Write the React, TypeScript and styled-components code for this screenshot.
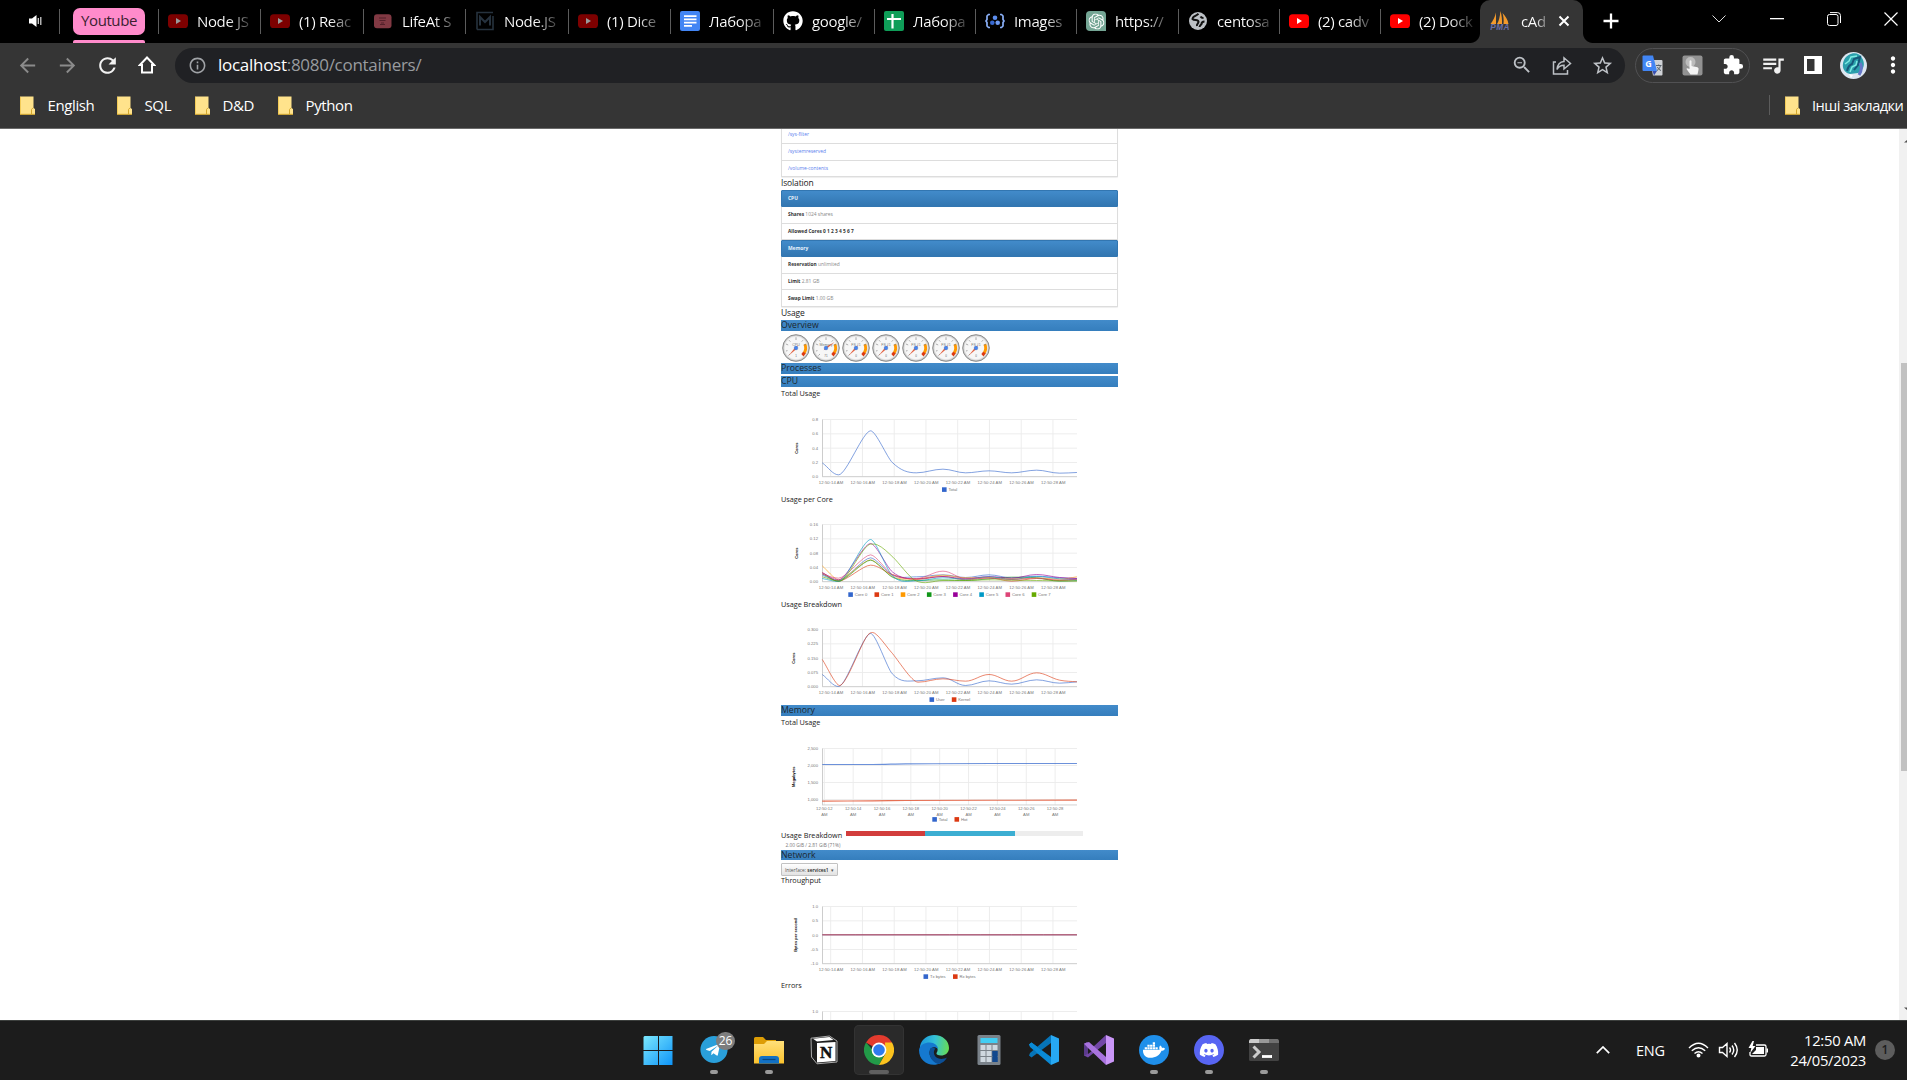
import React from 'react';
import styled, { createGlobalStyle, css } from 'styled-components';
import { FaDiscord, FaDocker, FaGithub, FaTelegramPlane } from 'react-icons/fa';
import { SiOpenai } from 'react-icons/si';
import {
  MdArrowBack, MdArrowForward, MdRefresh, MdExtension, MdMoreVert, MdStarBorder,
  MdInfoOutline, MdZoomOut, MdQueueMusic,
} from 'react-icons/md';

const Global = createGlobalStyle`
  * { box-sizing: border-box; }
  html, body { margin: 0; height: 1080px; overflow: hidden; background: #fff; }
  body { font-family: "Open Sans", "Noto Sans", sans-serif; }
  svg { display: block; flex: none; }
`;

const Screen = styled.div`
  width: 1907px;
  height: 1080px;
  display: flex;
  flex-direction: column;
  overflow: hidden;
`;

/* ---------- tab strip ---------- */
const TabStrip = styled.div`
  height: 43px;
  flex: none;
  display: flex;
  background: #000;
  color: #fff;
`;
const AudioTab = styled.div`
  width: 59px;
  display: flex;
  align-items: center;
  padding: 0 0 1px 29px;
`;
const Divider = styled.div<{ $mt?: number; $h?: number }>`
  width: 1px;
  flex: none;
  height: ${p => p.$h ?? 25}px;
  margin-top: ${p => p.$mt ?? 9}px;
  background: #5c5c5c;
`;
const GroupTab = styled.div`
  width: 98px;
  display: flex;
  flex-direction: column;
  align-items: flex-start;
  justify-content: space-between;
  padding: 8px 13px 0;
`;
const GroupPill = styled.div`
  width: 72px;
  height: 27px;
  border-radius: 7px;
  background: #ff8bcb;
  color: #3c1f30;
  font-size: 15px;
  line-height: 25px;
  letter-spacing: -0.4px;
  text-align: center;
`;
const GroupLine = styled.div`
  width: 72px;
  height: 3px;
  border-radius: 2px 2px 0 0;
  background: #ff8bcb;
`;
const TabBox = styled.div<{ $w: number }>`
  width: ${p => p.$w}px;
  flex: none;
  display: flex;
`;
const TabBody = styled.div`
  display: flex;
  align-items: center;
  gap: 9px;
  padding: 0 0 1px 9px;
`;
const TabTitle = styled.div<{ $w?: number; $tone: string }>`
  width: ${p => p.$w ?? 56}px;
  white-space: nowrap;
  font-size: 15px;
  letter-spacing: -0.35px;
  line-height: 22px;
  padding-bottom: 1px;
  color: transparent;
  background: linear-gradient(90deg, #fff 55%, ${p => p.$tone} 98%);
  background-clip: text;
`;
const ActiveTab = styled.div`
  position: relative;
  width: 103px;
  margin-left: -1px;
  flex: none;
  display: flex;
  align-items: center;
  padding: 0 0 1px 10px;
  gap: 11px;
  background: #353535;
  border-radius: 10px 10px 0 0;
  &::before, &::after {
    content: "";
    position: absolute;
    bottom: 0;
    width: 10px;
    height: 10px;
  }
  &::before { left: -10px; background: radial-gradient(circle at 0 0, #000 9.5px, #353535 10.5px); }
  &::after { right: -10px; background: radial-gradient(circle at 100% 0, #000 9.5px, #353535 10.5px); }
`;
const NewTab = styled.div`
  width: 56px;
  display: flex;
  align-items: center;
  justify-content: center;
  padding-bottom: 1px;
`;
const WindowButtons = styled.div`
  margin-left: auto;
  display: flex;
  height: 37px;
  margin-right: -13px;
`;
const WindowButton = styled.div`
  width: 57.4px;
  display: flex;
  align-items: center;
  justify-content: center;
`;

/* ---------- toolbar ---------- */
const Toolbar = styled.div`
  height: 45px;
  flex: none;
  display: flex;
  align-items: center;
  padding: 0 0 1px 7px;
  background: #353535;
  color: #f1f1f1;
`;
const IconCell = styled.div<{ $dim?: boolean }>`
  width: 40px;
  flex: none;
  display: flex;
  justify-content: center;
  color: ${p => (p.$dim ? '#8b8b8b' : 'inherit')};
`;
const Omnibox = styled.div`
  height: 35px;
  width: 1450px;
  flex: none;
  margin-left: 8px;
  border-radius: 18px;
  background: #202124;
  display: flex;
  align-items: center;
  padding: 0 3px 0 13px;
  color: #bdc1c6;
`;
const Url = styled.div`
  flex: 1;
  margin-left: 11px;
  font-size: 17px;
  letter-spacing: -0.28px;
  line-height: 24px;
  color: #989b9f;
  b { font-weight: 400; color: #fff; }
`;
const Extensions = styled.div`
  height: 35px;
  width: 115px;
  flex: none;
  margin: 0 3px 0 10px;
  display: flex;
  align-items: center;
  justify-content: center;
  border: 1px solid #515153;
  border-radius: 18px;
`;
const Avatar = styled.div`
  width: 27px;
  height: 27px;
  border-radius: 50%;
  overflow: hidden;
`;

/* ---------- bookmarks ---------- */
const Bookmarks = styled.div`
  height: 41px;
  flex: none;
  display: flex;
  align-items: center;
  padding: 0 0 6px 20px;
  background: #353535;
  border-bottom: 1px solid #6a6a6a;
  color: #fff;
`;
const Bookmark = styled.div<{ $w?: number; $tight?: boolean }>`
  width: ${p => (p.$w ? p.$w + 'px' : 'auto')};
  display: flex;
  align-items: center;
  gap: ${p => (p.$tight ? 12 : 12.5)}px;
  font-size: ${p => (p.$tight ? 14.6 : 15)}px;
  letter-spacing: ${p => (p.$tight ? -0.52 : -0.38)}px;
  line-height: 22px;
  white-space: nowrap;
`;
const OtherBookmarks = styled.div`
  margin-left: auto;
  width: 138px;
  display: flex;
  align-items: center;
  gap: 15px;
`;

/* ---------- page ---------- */
const Viewport = styled.div`
  height: 891px;
  flex: none;
  display: flex;
  overflow: hidden;
  background: #fff;
`;
const Page = styled.div`
  width: 337px;
  margin-left: 781px;
  display: flex;
  flex-direction: column;
  color: #333;
`;
const Scrollbar = styled.div`
  width: 8px;
  margin-left: auto;
  background: #f1f1f1;
  padding: 11px 0 10px;
  display: flex;
  flex-direction: column;
  align-items: flex-end;
`;
const Thumb = styled.div`
  width: 6px;
  height: 408px;
  margin: 220px 0 auto;
  background: #c1c1c1;
`;
const ListGroup = styled.div<{ $h: number }>`
  height: ${p => p.$h}px;
  flex: none;
  display: flex;
  flex-direction: column;
  border: 1px solid #ddd;
  border-top: 0;
  border-radius: 0 0 1px 1px;
  box-shadow: 0 1px 1px #eee;
`;
const rowText = css`
  font-size: 4.9px;
  line-height: 7px;
  padding-left: 6px;
  white-space: pre;
`;
const ListRow = styled.div<{ $link?: boolean; $h?: number }>`
  ${rowText}
  flex: ${p => (p.$h ? `0 0 ${p.$h}px` : 1)};
  display: flex;
  align-items: center;
  padding-bottom: ${p => (p.$h ? 3.5 : 0)}px;
  color: ${p => (p.$link ? '#5b80ee' : '#888')};
  & + & { border-top: 1px solid #ddd; }
  b { color: #333; font-weight: 700; font-size: 4.8px; }
`;
const ListHead = styled.div`
  ${rowText}
  height: 17px;
  flex: none;
  display: flex;
  align-items: center;
  color: #e8f2fb;
  font-weight: 700;
  border: 1px solid #3276b1;
  border-radius: 1px 1px 0 0;
  background: linear-gradient(#428bca, #3276b1);
`;
const Heading = styled.div<{ $h: number }>`
  height: ${p => p.$h}px;
  flex: none;
  padding-top: 0.5px;
  font-size: 8.5px;
  letter-spacing: -0.15px;
  line-height: 9px;
  color: #222;
`;
const SectionBar = styled.div<{ $mt?: number; $h?: number }>`
  height: ${p => p.$h ?? 11}px;
  margin-top: ${p => p.$mt ?? 0}px;
  flex: none;
  background: linear-gradient(#428bca, #357ebd);
  font-size: 8.7px;
  line-height: 11px;
  color: #1d2830;
`;
const Gauges = styled.div`
  height: 32px;
  flex: none;
  display: flex;
  gap: 2px;
  padding: 3px 0 0 1px;
`;
const ChartTitle = styled.div<{ $h: number; $mb: number }>`
  height: ${p => p.$h}px;
  margin-bottom: ${p => p.$mb}px;
  flex: none;
  display: flex;
  align-items: center;
  font-size: 7.3px;
  line-height: 9px;
  letter-spacing: -0.04px;
  color: #222;
`;
const BreakdownRow = styled.div`
  height: 14px;
  flex: none;
  display: flex;
  gap: 4px;
`;
const Progress = styled.div`
  width: 237px;
  height: 5px;
  margin-top: 4px;
  display: flex;
  background: #ededed;
`;
const Segment = styled.div<{ $w: number; $c: string }>`
  width: ${p => p.$w}px;
  background: ${p => p.$c};
`;
const BreakdownLabel = styled.div`
  width: 61px;
  font-size: 7.3px;
  line-height: 16px;
  letter-spacing: -0.02px;
  white-space: nowrap;
  color: #222;
`;
const Caption = styled.div`
  height: 9px;
  flex: none;
  padding-left: 4.5px;
  font-size: 4.8px;
  line-height: 8px;
  color: #777;
`;
const InterfaceButton = styled.div`
  width: 57px;
  height: 13px;
  margin-top: 3px;
  flex: none;
  display: flex;
  align-items: center;
  justify-content: center;
  white-space: pre;
  border: 1px solid #c2c2c2;
  border-radius: 1px;
  background: linear-gradient(#fff, #e2e2e2);
  font-size: 4.8px;
  color: #555;
  b { font-weight: 600; color: #222; }
`;

type Pt = [number, number];
interface Series { name?: string; color: string; points: Pt[] }

const smooth = (p: Pt[]) => {
  const slope = p.map((_, i) => {
    if (i === 0 || i === p.length - 1) return i === 0
      ? (p[1][1] - p[0][1]) / (p[1][0] - p[0][0])
      : (p[i][1] - p[i - 1][1]) / (p[i][0] - p[i - 1][0]);
    const a = (p[i][1] - p[i - 1][1]) / (p[i][0] - p[i - 1][0]);
    const b = (p[i + 1][1] - p[i][1]) / (p[i + 1][0] - p[i][0]);
    return a * b <= 0 ? 0 : (a + b) / 2;
  });
  let d = `M${p[0][0]} ${p[0][1]}`;
  for (let i = 0; i < p.length - 1; i++) {
    const steep = Math.abs(p[i + 1][1] - p[i][1]) > 40;
    const dx = (p[i + 1][0] - p[i][0]) * (steep ? 0.24 : 0.36);
    d += `C${p[i][0] + dx} ${p[i][1] + slope[i] * dx} ${p[i + 1][0] - dx} ${p[i + 1][1] - slope[i + 1] * dx} ${p[i + 1][0]} ${p[i + 1][1]}`;
  }
  return d;
};

const xs = [0, 49, 145, 210, 282, 362, 430, 500, 568, 643, 712, 764];
const line = (name: string, color: string, ys: number[]): Series =>
  ({ name, color, points: ys.map((y, i) => [xs[i], y] as Pt) });

interface ChartProps {
  axis?: string;
  axisX?: number;
  ticks: string[];
  tickYs?: number[];
  series: Series[];
  legend: [string, string, number][];
  memory?: boolean;
  height?: number;
  weight?: number;
}

const Chart = ({ axis, axisX = 16, ticks, tickYs, series, legend, memory, height = 92, weight = 0.85 }: ChartProps) => {
  const top = 18.5;
  const h = memory ? 56.5 : 57.2;
  const partial = height < 60;
  const rows = tickYs ?? ticks.map((_, i) => (h * i) / (ticks.length - 1));
  const cols = memory
    ? [12, 14, 16, 18, 20, 22, 24, 26, 28].map((s, i) => ({ s, x: 43.3 + i * 28.85 }))
    : [14, 16, 18, 20, 22, 24, 26, 28].map((s, i) => ({ s, x: 49.7 + i * 31.75 }));
  const ly = memory ? 89.5 : 88.7;
  return (
    <svg width="337" height={height} viewBox={`0 0 337 ${height}`} fontFamily='"Liberation Sans", Arial, sans-serif'>
      {cols.map(c => <rect key={c.s} x={c.x - 0.5} y={top} width="1" height={h} fill="#ededed" />)}
      {rows.map((y, i) => <rect key={i} x="41.3" y={top + y - 0.4} width="254.7" height="0.9" fill="#ebebeb" />)}
      <rect x="41" y={top} width="0.9" height={h} fill="#c8c8c8" />
      <rect x="41" y={top + h - 0.5} width="255" height="0.9" fill="#cecece" />
      {ticks.map((t, i) => (
        <text key={t} x="37" y={top + rows[i] + 1.5} fontSize="4.2" textAnchor="end" fill="#777">{t}</text>
      ))}
      <g transform={`translate(41.3 ${top}) scale(.33333)`}>
        {series.map((s, i) => (
          <path key={i} d={smooth(s.points)} fill="none" stroke={s.color} strokeWidth={weight * 3} strokeOpacity=".72" />
        ))}
      </g>
      {!partial && cols.map(c => memory ? (
        <g key={c.s} fontSize="4.2" textAnchor="middle" fill="#777">
          <text x={c.x} y="80" textLength="16.5">12:50:{c.s}</text>
          <text x={c.x} y="86">AM</text>
        </g>
      ) : (
        <text key={c.s} x={c.x + 0.3} y="82.900" fontSize="4.2" textAnchor="middle" fill="#777" textLength="24.4">12:50:{c.s} AM</text>
      ))}
      {axis && (
        <text transform={`translate(${axisX + 0.8} ${top + h / 2}) rotate(-90)`} fontSize="4" fontWeight="700" textAnchor="middle" fill="#000">{axis}</text>
      )}
      {legend.map(([n, c, x]) => (
        <g key={n}>
          <rect x={x} y={ly - 2.4} width="4.6" height="4.6" fill={c} />
          <text x={x + 6.4} y={ly + 1.4} fontSize="4.2" fill="#777">{n}</text>
        </g>
      ))}
    </svg>
  );
};

const BLUE = '#3366cc';
const RED = '#dc3912';

const cores: Series[] = [
  line('Core 0', '#3366cc', [152, 168, 100, 152, 157, 151, 159, 151, 160, 155, 160, 162]),
  line('Core 1', '#dc3912', [144, 170, 122, 150, 165, 156, 166, 160, 170, 162, 168, 164]),
  line('Core 2', '#ff9900', [124, 166, 106, 156, 163, 152, 160, 159, 163, 160, 164, 157]),
  line('Core 3', '#109618', [148, 170, 107, 158, 168, 166, 168, 163, 158, 160, 170, 168]),
  line('Core 4', '#990099', [145, 166, 57, 142, 163, 156, 163, 156, 161, 150, 159, 162]),
  line('Core 5', '#0099c6', [162, 171, 45, 154, 169, 160, 164, 157, 165, 156, 163, 166]),
  line('Core 6', '#dd4477', [149, 161, 91, 150, 162, 140, 162, 161, 165, 161, 167, 165]),
  { name: 'Core 7', color: '#66aa00', points: [[0, 157], [52, 170], [145, 59], [165, 61], [212, 98], [277, 167], [362, 168], [430, 168], [500, 166], [568, 167], [643, 168], [712, 169], [764, 170]] },
];

const Gauge = ({ label, value, angle }: { label: string; value: string; angle: number }) => (
  <svg width="28" height="28" viewBox="0 0 28 28" fontFamily='"Liberation Sans", Arial, sans-serif'>
    <circle cx="14" cy="14" r="13.3" fill="#ccc" stroke="#8b8b8b" strokeWidth="1" />
    <circle cx="14" cy="14" r="11.7" fill="#f7f7f7" stroke="#e2e2e2" strokeWidth=".6" />
    <path d="M22.9 10.3A9.6 9.6 0 0 1 22.2 19" fill="none" stroke="#ff9900" strokeWidth="2.9" />
    <path d="M22.4 18.6A9.6 9.6 0 0 1 20.4 21.2" fill="none" stroke="#dc3912" strokeWidth="3.2" />
    <path d="M14 3.2v2.8M4 10l2.2 1M6.4 21.6l1.6-1.6M7 6.2l1.3 1.4M21 6.2l-1.3 1.4M24 10l-2.2 1M4 17l1.5-.4" stroke="#777" strokeWidth=".6" />
    <text x="14" y="11.6" fontSize="3.6" textAnchor="middle" fill="#777">{label}</text>
    <text x="14" y="23.4" fontSize="3" textAnchor="middle" fill="#666">{value}</text>
    <g transform={`rotate(${angle} 14 14)`}>
      <path d="M10.8 14.6L14 13 24.500 13.8 14 15Z" fill="#dc3912" fillOpacity=".8" />
    </g>
    <circle cx="14" cy="14" r="1.9" fill="#4684ee" stroke="#3b69b8" strokeWidth=".3" />
  </svg>
);

/* ---------- favicons ---------- */
const YouTube = ({ dim }: { dim?: boolean }) => (
  <svg width="20" height="20" viewBox="0 0 20 20">
    <rect y="3.2" width="20" height="13.8" rx="3.6" fill={dim ? '#7d0000' : '#f00'} />
    <path d="M8 7.1v5.8l5-2.9z" fill={dim ? '#9a9a9a' : '#fff'} />
  </svg>
);
const LifeAt = () => (
  <svg width="20" height="20" viewBox="0 0 20 20">
    <rect x="1" y="3.2" width="17.5" height="14" rx="3" fill="#813943" />
    <path d="M6 7h7M6.5 9.5h6M8 12h3M7 13.5h5" stroke="#53202a" strokeWidth="1.2" />
  </svg>
);
const MetaM = () => (
  <svg width="20" height="20" viewBox="0 0 20 20" fill="none" stroke="#26323e" strokeWidth="1.6">
    <path d="M18 1.5H2v17M18 5v13.5H2" /><path d="M5 14.5V6l5 5 5-5v8.5" strokeWidth="2" />
  </svg>
);
const Docs = () => (
  <svg width="20" height="20" viewBox="0 0 20 20">
    <rect width="20" height="20" rx="2" fill="#4285f4" />
    <path d="M4 5.2h12.5M4 8.4h12.5M4 11.6h12.5M4 14.8h8" stroke="#fff" strokeWidth="1.7" />
  </svg>
);
const Sheets = () => (
  <svg width="20" height="20" viewBox="0 0 20 20">
    <rect width="20" height="20" rx="2" fill="#0f9d58" />
    <path d="M8.5 3v14.5M3 8h14" stroke="#fff" strokeWidth="2.2" />
  </svg>
);
const ImagesIcon = () => (
  <svg width="20" height="20" viewBox="0 0 20 20">
    <path d="M5 3.5H3.5L2 5v3.5L1 10l1 1.5V15l1.5 1.5H5M15 3.5h1.5L18 5v3.5l1 1.5-1 1.5V15l-1.5 1.5H15" fill="none" stroke="#8ab0f8" strokeWidth="1.7" />
    <circle cx="10" cy="6.7" r="2.3" fill="#5c8dee" /><circle cx="7.3" cy="11.7" r="2.3" fill="#3768d0" /><circle cx="12.7" cy="11.7" r="2.3" fill="#6f9bf3" />
  </svg>
);
const Gpt = () => (
  <svg width="20" height="20" viewBox="0 0 20 20">
    <path d="M4 0h12a4 4 0 0 1 4 4v16H4a4 4 0 0 1-4-4V4a4 4 0 0 1 4-4z" fill="#74a594" />
    <SiOpenai x="2.5" y="2.5" width="15" height="15" color="#fff" />
  </svg>
);
const Globe = () => (
  <svg width="20" height="20" viewBox="0 0 20 20">
    <circle cx="10" cy="10" r="9" fill="#bdc1c6" />
    <path d="M10.5 2.8C8 5.300 4.500 5 4.500 8c2 2 5.500 0 6 2.700 0 2-2 2-1.500 4.300M12.5 5.500c.5 1 1.500 1.500 3 1.500M16.500 10.500c-2 0-3 1-3 2.500-1 1-2 2-2 3" stroke="#111" strokeWidth="2" fill="none" />
  </svg>
);
const Sails = () => (
  <svg width="20" height="20" viewBox="0 0 20 20">
    <path d="M6 1.5C5 6 3 10 .5 13H6zM10.5 0C10 5 9 10 7 13h5c.2-4-.3-9-1.5-13zM12.5 2c3 3 5.500 7 6 11h-5c.5-4 0-8-1-11z" fill="#f39a2c" />
    <text x="9.8" y="19" fontSize="8.2" fontWeight="700" fontStyle="italic" textAnchor="middle" fill="#6a70a8" fontFamily="Liberation Sans, sans-serif" textLength="19">PMA</text>
  </svg>
);
const Folder = () => (
  <svg width="15" height="19" viewBox="0 0 15 19">
    <path d="M0 .5h13.5V12l1.5 1v5.5H0z" fill="#ffe38c" /><path d="M0 18.3h15M11.5 18v-4.500l1.500-1.700" stroke="#d5a82c" fill="none" />
    <path d="M.5 1v17" stroke="#f3cb57" />
  </svg>
);
const ScrollArrow = ({ down }: { down?: boolean }) => (
  <svg width="3" height="3" viewBox="0 0 3 3"><path d={down ? 'M0 .5h3V3z' : 'M0 2.500h3V0z'} fill="#505050" /></svg>
);

const tabs: { title: string; icon: React.ReactNode; w: number }[] = [
  { title: 'Node JS', icon: <YouTube dim />, w: 102 },
  { title: '(1) Reac', icon: <YouTube dim />, w: 103 },
  { title: 'LifeAt S', icon: <LifeAt />, w: 102 },
  { title: 'Node.JS', icon: <MetaM />, w: 103 },
  { title: '(1) Dice', icon: <YouTube dim />, w: 102 },
  { title: 'Лабора', icon: <Docs />, w: 103 },
  { title: 'google/', icon: <FaGithub size={20} color="#fff" />, w: 101 },
  { title: 'Лабора', icon: <Sheets />, w: 101 },
  { title: 'Images', icon: <ImagesIcon />, w: 101 },
  { title: 'https://', icon: <Gpt />, w: 102 },
  { title: 'centosa', icon: <Globe />, w: 101 },
  { title: '(2) cadv', icon: <YouTube />, w: 101 },
  { title: '(2) Dock', icon: <YouTube />, w: 101 },
];

/* ---------- taskbar ---------- */
const Taskbar = styled.div`
  height: 60px;
  flex: none;
  display: flex;
  background: #1c1c1c;
  border-top: 1px solid #3c3f3d;
  padding-left: 630px;
  color: #fff;
`;
const AppCell = styled.div`
  width: 55px;
  flex: none;
  padding: 4px 2.5px 0;
  &:not(:first-child) { transform: translateX(1px); }
`;
const AppButton = styled.div<{ $active?: boolean }>`
  position: relative;
  height: 50px;
  display: flex;
  flex-direction: column;
  align-items: center;
  padding-top: 10px;
  border-radius: 5px;
  background: ${p => (p.$active ? '#2a2a2a' : 'transparent')};
  box-shadow: ${p => (p.$active ? 'inset 0 0 0 1px #333' : 'none')};
`;
const Indicator = styled.div<{ $w: number }>`
  width: ${p => p.$w}px;
  height: 4px;
  margin-top: 5px;
  border-radius: 2px;
  background: ${p => (p.$w > 10 ? '#5f5f5f' : '#9a9a9a')};
`;
const Badge = styled.div`
  position: absolute;
  left: 27.5px;
  top: 6.5px;
  width: 19px;
  height: 18px;
  border-radius: 9px;
  background: #7e7e7e;
  font-size: 12px;
  line-height: 17px;
  text-align: center;
`;
const RoundIcon = styled.div<{ $c: string }>`
  width: 30px;
  height: 30px;
  display: flex;
  align-items: center;
  justify-content: center;
  border-radius: 50%;
  background: ${p => p.$c};
`;
const Tray = styled.div`
  margin-left: auto;
  display: flex;
  align-items: center;
  padding: 0 12px 1px 0;
`;
const Lang = styled.div`
  width: 30px;
  margin: 1px 22px 0 26px;
  font-size: 14.5px;
  letter-spacing: -0.2px;
`;
const TrayIcons = styled.div`
  display: flex;
  gap: 9px;
`;
const Clock = styled.div`
  width: 97px;
  text-align: right;
  font-size: 14.8px;
  line-height: 20px;
  letter-spacing: -0.28px;
  white-space: nowrap;
`;
const Notice = styled.div`
  width: 20px;
  height: 20px;
  margin-left: 9px;
  border-radius: 50%;
  background: #5d5d5d;
  color: #1c1c1c;
  font-size: 12px;
  font-weight: 600;
  line-height: 19px;
  text-align: center;
`;

const WindowsLogo = () => (
  <svg width="30" height="30" viewBox="0 0 30 30">
    <defs><linearGradient id="win" x1="0" y1="0" x2="30" y2="30" gradientUnits="userSpaceOnUse"><stop stopColor="#7eeafe" /><stop offset="1" stopColor="#0d93f8" /></linearGradient></defs>
    <path d="M1.5 1H15v14H.5V2zM16 1h13.500v14H16zM.5 16H15v14H.5zM16 16h13.500v14H16z" fill="url(#win)" />
  </svg>
);
const FolderApp = () => (
  <svg width="30" height="30" viewBox="0 0 30 30">
    <defs><linearGradient id="fold" x2="0" y2="1"><stop stopColor="#ffe07a" /><stop offset="1" stopColor="#fbc22d" /></linearGradient></defs>
    <path d="M0 3.5Q0 2 1.5 2H9l3 3h10v6H0z" fill="#dd9d05" />
    <path d="M0 9h10l3-3h17v22.500H0z" fill="url(#fold)" />
    <path d="M5 28.500v-4.500q0-3 3-3h14q3 0 3 3v4.500z" fill="#1271c4" /><path d="M8.500 24.500h13" stroke="#074781" strokeWidth="1.2" />
  </svg>
);
const Notion = () => (
  <svg width="30" height="30" viewBox="0 0 30 30">
    <path d="M2 3.200L20.500 1 28 6v21L8 28.800 2.500 22z" fill="#1d1d1d" stroke="#aaa" strokeWidth="1" />
    <path d="M4 3.800L20.500 2l4 3-16.500 1.500z" fill="#fff" /><path d="M8 8l18.500-1v19L8 27.500z" fill="#fff" />
    <text x="17.200" y="23" textAnchor="middle" fontSize="17" fontWeight="700" fill="#111" stroke="#111" strokeWidth=".5" fontFamily="Liberation Serif, serif">N</text>
  </svg>
);
const ChromeLogo = () => (
  <svg width="30" height="30" viewBox="0 0 30 30">
    <path d="M15 15L2 7.500A15 15 0 0 1 28 7.500z" fill="#e33b2e" />
    <path d="M2 7.500A15 15 0 0 0 15 30l6-11.500-6 3.500z" fill="#229a48" />
    <path d="M28 7.500A15 15 0 0 1 15 30l6.500-11.500-.5-11z" fill="#fcc31e" />
    <circle cx="15" cy="15" r="7.400" fill="#fff" /><circle cx="15" cy="15" r="5.800" fill="#2f7bee" />
  </svg>
);
const EdgeLogo = () => (
  <svg width="30" height="30" viewBox="0 0 30 30">
    <defs>
      <linearGradient id="edge" x1="0" y1=".4" x2="1" y2=".5"><stop stopColor="#1b98dd" /><stop offset=".5" stopColor="#35c2d6" /><stop offset="1" stopColor="#67dd55" /></linearGradient>
    </defs>
    <path d="M1 11C3 3.500 9 0 15 0c9 0 15 6 15 13 0 5-4 7.500-8 7.500-3 0-5-1-4.500-2.500 3-4 0-8-5-8C7 10 3 11.500 1 15z" fill="url(#edge)" />
    <path d="M0 15C1 9.500 6 7.500 10.500 7.500c5 0 8.500 3 8.500 6.500-3-3-8-2-8.500 3C10 23 16 28 22 28c-10 5-22-1-22-13z" fill="#1579cf" />
    <path d="M11.500 13C9 18 11 26 19 29c4-.5 7-3 9-6.500-6 3-12 1-13-4-.4-2 .3-4 1.500-5-2-1-4-.8-5-.5z" fill="#0c4f96" />
  </svg>
);
const Calculator = () => (
  <svg width="30" height="30" viewBox="0 0 30 30">
    <rect x="3.500" width="23" height="30" rx="1.500" fill="#7a828a" />
    <rect x="6.500" y="3" width="17" height="5" fill="#41cdf3" />
    {[0, 1, 2].map(r => [0, 1, 2].map(c => (
      <rect key={`${r}${c}`} x={6.5 + c * 6} y={10 + r * 6} width="5" height="5" fill={c === 2 && r > 0 ? '#12488e' : '#cfd8e0'} />
    )))}
    <rect x="18.500" y="16" width="5" height="11" fill="#12488e" />
  </svg>
);
const VsCode = () => (
  <svg width="30" height="30" viewBox="0 0 30 30">
    <path d="M0 9.500L2.500 7.500 22 22v8L1 12z" fill="#0a8ad6" />
    <path d="M0 20.500L2.500 22.500 22 8V0L1 18z" fill="#0674b8" />
    <path d="M0 9.500L2.500 7.500 12 14.800 9 19z" fill="#0a8ad6" />
    <path d="M22 0l8 3.500v23L22 30z" fill="#27a8f3" />
  </svg>
);
const VisualStudio = () => (
  <svg width="30" height="30" viewBox="0 0 30 30">
    <path d="M0 9l3-2 6 5 13-12v8L4 22.500l-4-2z" fill="#7247a6" /><path d="M4 12.500l4.500 3L4 19z" fill="#1c1c1c" /><path d="M0 9l4 3.500v6L0 21z" fill="#5b3a8c" />
    <path d="M0 8.500L5 7 22 22v8L4 13z" fill="#a873de" />
    <path d="M22 0l8 3.500v23L22 30z" fill="#ca96f7" />
  </svg>
);
const Terminal = () => (
  <svg width="30" height="30" viewBox="0 0 30 30">
    <rect y="4" width="30" height="22" rx="1.500" fill="#424242" />
    <path d="M1.500 4H10v4H0V5.500z" fill="#ccc" /><path d="M10 4h10v4H10z" fill="#999" /><path d="M20 4h8.500L30 5.500V8H20z" fill="#707070" />
    <path d="M4.500 11.500l5.500 5.500-5.500 5.500" stroke="#ccc" strokeWidth="3" fill="none" /><path d="M13 21.500h10" stroke="#fff" strokeWidth="2.800" />
  </svg>
);

const apps: { icon: React.ReactNode; dot?: number; badge?: string; active?: boolean }[] = [
  { icon: <WindowsLogo /> },
  { icon: <svg width="30" height="30" viewBox="0 0 30 30"><circle cx="15" cy="14.500" r="13.600" fill="#2a9fda" /><FaTelegramPlane x="6" y="7" width="16" height="16" color="#fff" /></svg>, dot: 8, badge: '26' },
  { icon: <FolderApp />, dot: 8 },
  { icon: <Notion /> },
  { icon: <ChromeLogo />, dot: 20, active: true },
  { icon: <EdgeLogo /> },
  { icon: <Calculator /> },
  { icon: <VsCode /> },
  { icon: <VisualStudio /> },
  { icon: <RoundIcon $c="#1f8fea"><FaDocker size={22} /></RoundIcon>, dot: 8 },
  { icon: <RoundIcon $c="#5865f2"><FaDiscord size={20} /></RoundIcon>, dot: 8 },
  { icon: <Terminal />, dot: 8 },
];

export default function App() {
  return (
    <Screen>
      <Global />
      <TabStrip>
        <AudioTab>
          <svg width="14" height="14" viewBox="0 0 14 14"><path d="M0 4.500h3L7.500 1v12L3 9.500H0z" fill="#fff" /><path d="M9.300 4v6M11.800 3v8" stroke="#ddd" strokeWidth="1.200" /></svg>
        </AudioTab>
        <Divider />
        <GroupTab><GroupPill>Youtube</GroupPill><GroupLine /></GroupTab>
        {tabs.map((t, i) => (
          <TabBox key={i} $w={t.w}>
            <Divider />
            <TabBody>{t.icon}<TabTitle $tone="#222">{t.title}</TabTitle></TabBody>
          </TabBox>
        ))}
        <ActiveTab>
          <Sails />
          <TabTitle $w={26} $tone="#777">cAd</TabTitle>
          <svg width="12" height="12" viewBox="0 0 12 12"><path d="M1.500 1.500l9 9M10.500 1.500l-9 9" stroke="#fff" strokeWidth="2" /></svg>
        </ActiveTab>
        <NewTab><svg width="16" height="16" viewBox="0 0 16 16"><path d="M8 .5v15M.5 8h15" stroke="#fff" strokeWidth="2.300" /></svg></NewTab>
        <WindowButtons>
          <WindowButton><svg width="14" height="8" viewBox="0 0 14 8"><path d="M.5.5L7 7l6.500-6.500" fill="none" stroke="#ddd" /></svg></WindowButton>
          <WindowButton><svg width="14" height="2"><rect width="14" height="1.300" fill="#fff" /></svg></WindowButton>
          <WindowButton><svg width="14" height="14" viewBox="0 0 14 14" fill="none" stroke="#fff"><rect x=".5" y="2.500" width="10.500" height="11" rx="2" /><path d="M3 .6h7.500q3 0 3 3V11" /></svg></WindowButton>
          <WindowButton><svg width="14" height="14" viewBox="0 0 14 14"><path d="M.5.5l13 13M13.500.5l-13 13" stroke="#fff" strokeWidth="1.200" /></svg></WindowButton>
        </WindowButtons>
      </TabStrip>

      <Toolbar>
        <IconCell $dim><MdArrowBack size={23} /></IconCell>
        <IconCell $dim><MdArrowForward size={23} /></IconCell>
        <IconCell><MdRefresh size={25} /></IconCell>
        <IconCell><svg width="18" height="18" viewBox="0 0 18 18"><path d="M9 1.500L1.800 9H4v7.500h10V9h2.200z" fill="none" stroke="#fff" strokeWidth="2" /></svg></IconCell>
        <Omnibox>
          <MdInfoOutline size={19} color="#a0a3a7" />
          <Url><b>localhost</b>:8080/containers/</Url>
          <IconCell><MdZoomOut size={22} /></IconCell>
          <IconCell>
            <svg width="20" height="20" viewBox="0 0 20 20" fill="none" stroke="#bdc1c6" strokeWidth="1.500"><path d="M4 7H1.500v12h14v-4" /><path d="M5 14.500C5.500 9 8 6.800 12 6.500V2.800l6.500 5.700-6.500 5.500v-3.800c-3 0-5.500 1-7 4.300z" /></svg>
          </IconCell>
          <IconCell><MdStarBorder size={23} /></IconCell>
        </Omnibox>
        <Extensions>
          <IconCell>
            <svg width="21" height="21" viewBox="0 0 21 21"><path d="M8 5h11.500q1 0 1 1v13.500q0 1-1 1H11z" fill="#cfd2d6" /><path d="M.5 1.500q0-1 1-1H11l4 15.500H1.500q-1 0-1-1z" fill="#4286f4" /><path d="M10.500 16H15l-3 4.500z" fill="#3a4fae" /><path d="M14 10.500h5.500M16.700 9.500v1M18.500 10.500c-.5 2.500-2 4-3.500 5M15.500 12c.5 1.500 2 3 3.500 3.500" stroke="#56606a" fill="none" />
              <text x="6.500" y="11.500" fontSize="9" fontWeight="700" fill="#fff" textAnchor="middle">G</text></svg>
          </IconCell>
          <IconCell>
            <svg width="21" height="21" viewBox="0 0 21 21"><rect x=".5" y=".5" width="20" height="20" rx="2" fill="#929292" /><circle cx="8.500" cy="7" r="5" fill="#bcbcbc" /><path d="M7.500 6q1-1.500 2 0v5l6 1.200q1.500.5 1 2.500l-1 4.800H8.500L4.500 14q0-1.500 3 0z" fill="#f4f4f4" /></svg>
          </IconCell>
          <IconCell><MdExtension size={22} color="#fff" /></IconCell>
        </Extensions>
        <IconCell><MdQueueMusic size={26} /></IconCell>
        <IconCell><svg width="18" height="18" viewBox="0 0 18 18"><path d="M0 0h18v18H0zM3 3v12h7.500V3z" fill="#fff" fillRule="evenodd" /></svg></IconCell>
        <IconCell>
          <Avatar>
            <svg width="27" height="27" viewBox="0 0 27 27">
              <rect width="27" height="27" fill="#dce6f0" />
              <path d="M4 8C8 0 19-1 22 6c4 6 1 13-4 15l-8 1C4 21 1 15 4 8z" fill="#2b9fac" />
              <path d="M7 19c1-4 2-6 5-7l2-5 6-2-2 8-4 5" fill="none" stroke="#16587a" strokeWidth="2" />
              <path d="M5 12l4-3 2-4 6-1M10 20l2-5 4-2 1-4" fill="none" stroke="#7cebe2" strokeWidth="1.500" />
              <path d="M20 11c2 3 2 7-1 12" stroke="#6677c8" strokeWidth="3" fill="none" />
              <path d="M9 22l4 1-2 3z" fill="#fff" />
            </svg>
          </Avatar>
        </IconCell>
        <IconCell><MdMoreVert size={26} color="#fff" /></IconCell>
      </Toolbar>

      <Bookmarks>
        <Bookmark $w={97}><Folder />English</Bookmark>
        <Bookmark $w={78}><Folder />SQL</Bookmark>
        <Bookmark $w={83}><Folder />D&amp;D</Bookmark>
        <Bookmark><Folder />Python</Bookmark>
        <OtherBookmarks><Divider $mt={0} $h={20} /><Bookmark $tight><Folder />Інші закладки</Bookmark></OtherBookmarks>
      </Bookmarks>

      <Viewport>
        <Page>
          <ListGroup $h={48}>
            <ListRow $link $h={14}>/sys-filter</ListRow>
            <ListRow $link>/systemreserved</ListRow>
            <ListRow $link>/volume-contents</ListRow>
          </ListGroup>
          <Heading $h={13}>Isolation</Heading>
          <ListHead>CPU</ListHead>
          <ListGroup $h={33}>
            <ListRow><b>Shares</b> 1024 shares</ListRow>
            <ListRow><b>Allowed Cores 0 1 2 3 4 5 6 7</b></ListRow>
          </ListGroup>
          <ListHead>Memory</ListHead>
          <ListGroup $h={50}>
            <ListRow><b>Reservation</b> unlimited</ListRow>
            <ListRow><b>Limit</b> 2.81 GB</ListRow>
            <ListRow><b>Swap Limit</b> 1.00 GB</ListRow>
          </ListGroup>
          <Heading $h={13}>Usage</Heading>
          <SectionBar>Overview</SectionBar>
          <Gauges>
            <Gauge label="CPU" value="1" angle={135} />
            <Gauge label="Memory" value="71" angle={-33} />
            {[0, 1, 2, 3, 4].map(i => <Gauge key={i} label="FS #1" value="0" angle={135} />)}
          </Gauges>
          <SectionBar>Processes</SectionBar>
          <SectionBar $mt={2}>CPU</SectionBar>

          <ChartTitle $h={12} $mb={2}>Total Usage</ChartTitle>
          <Chart
            axis="Cores" ticks={['0.8', '0.6', '0.4', '0.2', '0.0']}
            series={[line('Total', BLUE, [130, 166, 34, 129, 160, 149, 160, 154, 160, 152, 161, 159])]}
            legend={[['Total', BLUE, 161]]}
          />
          <ChartTitle $h={13} $mb={0}>Usage per Core</ChartTitle>
          <Chart
            axis="Cores" ticks={['0.16', '0.12', '0.08', '0.04', '0.00']} series={cores}
            legend={cores.map((c, i) => [c.name!, c.color, 67.3 + i * 26.2] as [string, string, number])}
          />
          <ChartTitle $h={13} $mb={0}>Usage Breakdown</ChartTitle>
          <Chart
            axis="Cores" axisX={13} ticks={['0.300', '0.225', '0.150', '0.075', '0.000']}
            series={[
              line('User', BLUE, [135, 171, 12, 133, 154, 145, 168, 154, 164, 151, 161, 157]),
              { color: RED, points: [[0, 90], [52, 168], [137, 16], [151, 9], [207, 68], [287, 158], [362, 148], [430, 155], [500, 135], [568, 155], [643, 130], [712, 152], [764, 157]] },
            ]}
            legend={[['User', BLUE, 148.5], ['Kernel', RED, 170.8]]}
          />

          <SectionBar $mt={2}>Memory</SectionBar>
          <ChartTitle $h={12} $mb={2}>Total Usage</ChartTitle>
          <Chart
            memory height={97} weight={1.1} axis="Megabytes" axisX={13}
            ticks={['2,500', '2,000', '1,500', '1,000']} tickYs={[0, 17, 34, 51]}
            series={[
              { color: BLUE, points: [[0, 48], [150, 48], [250, 46], [764, 45]] },
              { color: RED, points: [[0, 158], [150, 157], [250, 156], [764, 155]] },
            ]}
            legend={[['Total', BLUE, 151.3], ['Hot', RED, 173.5]]}
          />
          <BreakdownRow>
            <BreakdownLabel>Usage Breakdown</BreakdownLabel>
            <Progress><Segment $w={79} $c="#d23d3c" /><Segment $w={90} $c="#3caed2" /></Progress>
          </BreakdownRow>
          <Caption>2.00 GiB / 2.81 GiB (71%)</Caption>
          <SectionBar $h={10}>Network</SectionBar>
          <InterfaceButton>Interface: <b>services1</b>  ▾</InterfaceButton>
          <ChartTitle $h={9} $mb={3}>Throughput</ChartTitle>
          <Chart
            axis="Bytes per second" axisX={15.5} ticks={['1.0', '0.5', '0.0', '-0.5', '-1.0']} weight={1}
            series={[{ color: '#3c3c9c', points: [[0, 85], [764, 85]] }, { color: '#cc3030', points: [[0, 85], [764, 85]] }]}
            legend={[['Tx bytes', BLUE, 142.5], ['Rx bytes', RED, 172]]}
          />
          <ChartTitle $h={11} $mb={2}>Errors</ChartTitle>
          <Chart height={27} ticks={['1.0']} tickYs={[0]} series={[]} legend={[]} />
        </Page>
        <Scrollbar><ScrollArrow /><Thumb /><ScrollArrow down /></Scrollbar>
      </Viewport>

      <Taskbar>
        {apps.map((a, i) => (
          <AppCell key={i}>
            <AppButton $active={a.active}>
              {a.icon}
              {a.dot && <Indicator $w={a.dot} />}
              {a.badge && <Badge>{a.badge}</Badge>}
            </AppButton>
          </AppCell>
        ))}
        <Tray>
          <svg width="14" height="8" viewBox="0 0 14 8"><path d="M.8 7.200L7 1l6.200 6.200" fill="none" stroke="#fff" strokeWidth="1.700" /></svg>
          <Lang>ENG</Lang>
          <TrayIcons>
            <svg width="21" height="18" viewBox="0 0 21 18" fill="none" stroke="#fff" strokeWidth="1.400"><path d="M1 7Q10.500-2.500 20 7M3.800 9.800q6.700-6.200 13.400 0M6.500 12.500q4-3.600 8 0" /><circle cx="10.500" cy="14.500" r="1.300" fill="#fff" /></svg>
            <svg width="21" height="18" viewBox="0 0 21 18" fill="none" stroke="#fff" strokeWidth="1.400"><path d="M1.500 6.500h3L9 2.500v13L4.500 11.500h-3zM11.500 6.500q2 2.500 0 5M14 4.500q3.500 4.500 0 9M16.500 2q5.500 7 0 14" /></svg>
            <svg width="21" height="18" viewBox="0 0 21 18"><path d="M8 4h8.500q1.500 0 1.500 1.500v8q0 1.500-1.500 1.500H3.500Q2 15 2 13.500V11" fill="none" stroke="#fff" strokeWidth="1.300" /><path d="M8 6h8v7H4l4-4zM18.500 7.500H20v4h-1.500z" fill="#fff" /><path d="M4.500 0L.5 7h2.800l-1 5L7.500 5H4.700L6 0z" fill="#fff" /></svg>
          </TrayIcons>
          <Clock><div>12:50 AM</div><div>24/05/2023</div></Clock>
          <Notice>1</Notice>
        </Tray>
      </Taskbar>
    </Screen>
  );
}
